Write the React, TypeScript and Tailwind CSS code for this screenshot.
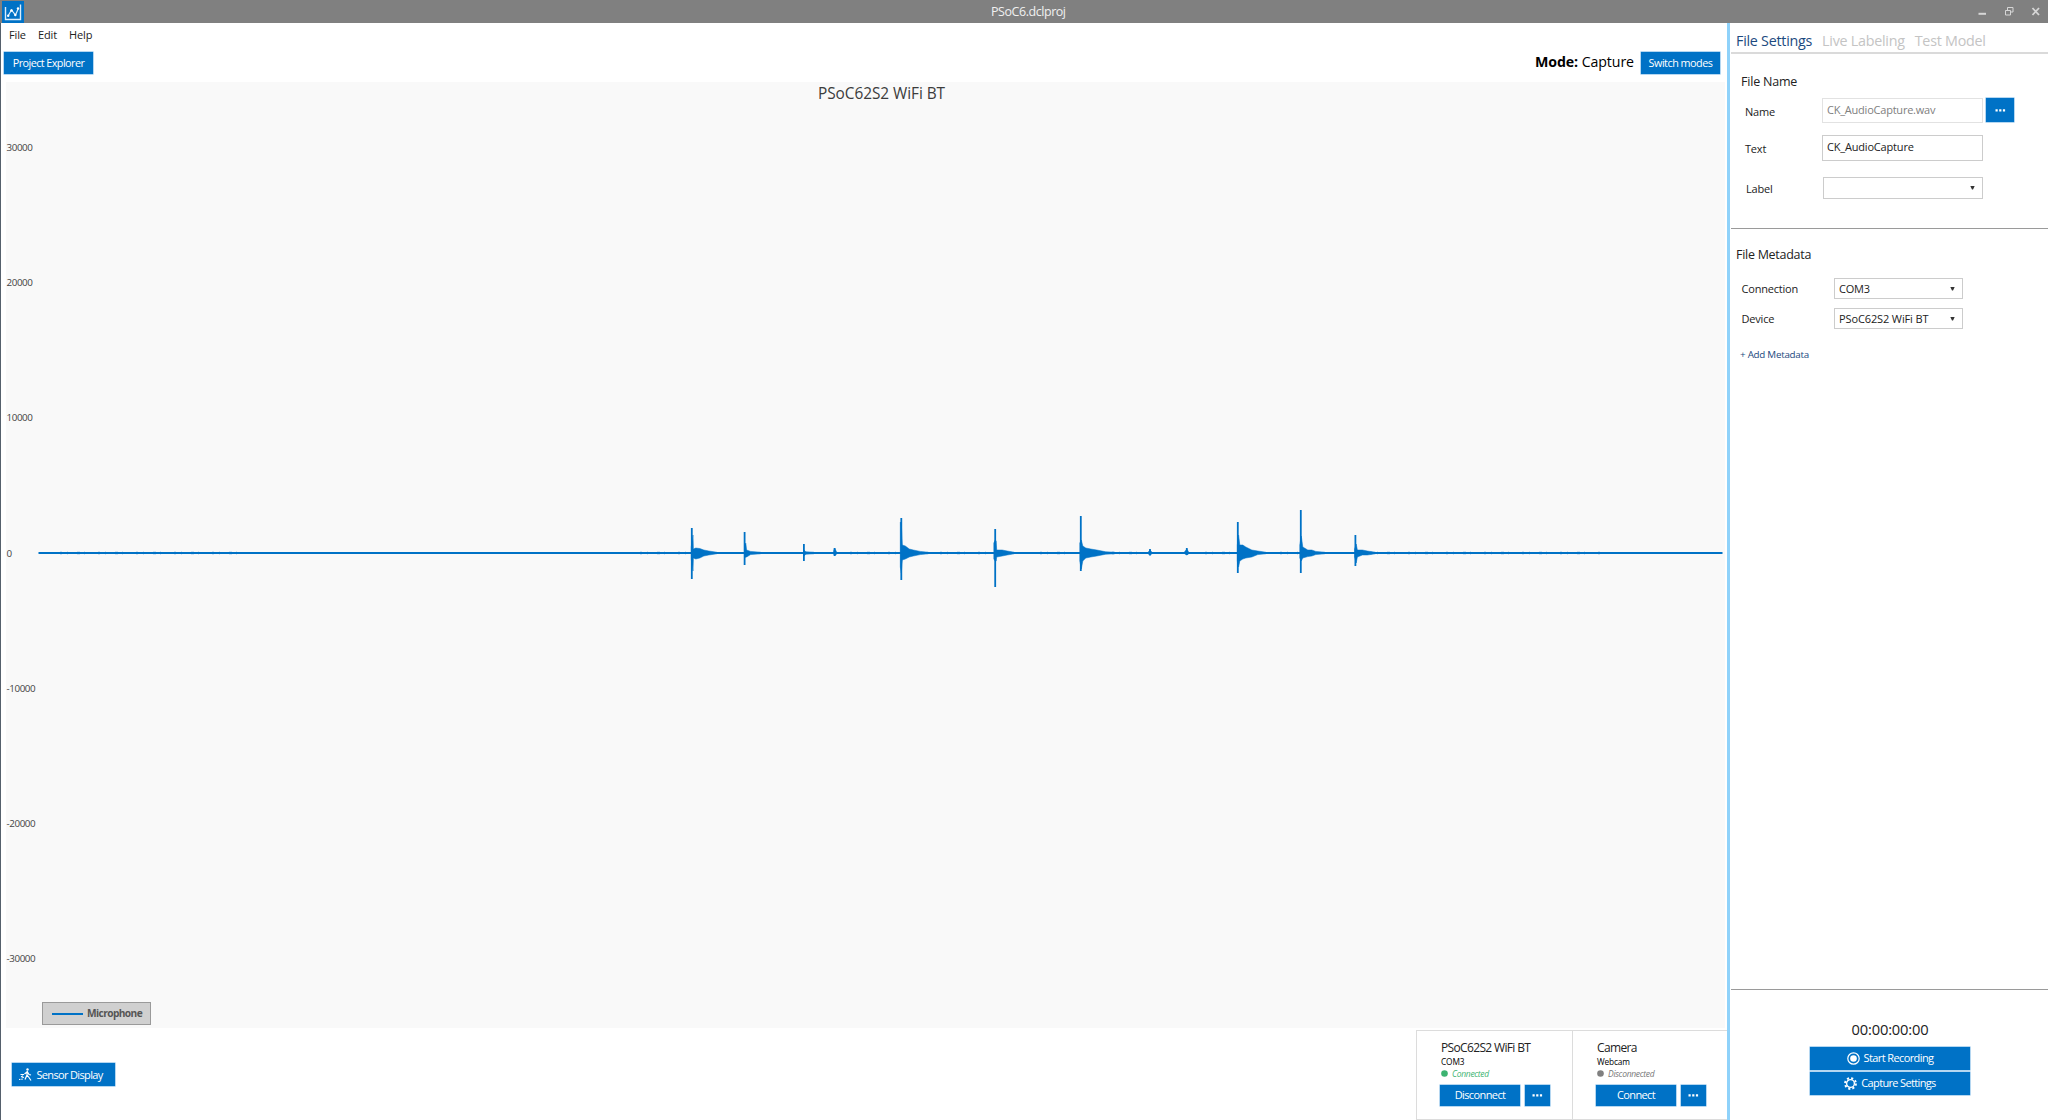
import React from "react";

const BLUE = "#0072c6";

function Arrow() {
  return (
    <svg width="5" height="4" viewBox="0 0 5 4" className="shrink-0">
      <path d="M0.300 0h4.400L3 3.500H2z" fill="#333" />
    </svg>
  );
}

function Dots() {
  return (
    <svg width="11" height="3" viewBox="0 0 11 3">
      <path d="M0.500 0.300h2.200v2.200H0.500zM4.200 0.300h2.200v2.200H4.200zM7.900 0.300h2.200v2.200H7.900z" fill="#fff" />
    </svg>
  );
}

const btn = "flex items-center justify-center bg-[#0072c6] text-white shadow-[0_0_0_0.5px_#6cb0e4]";

// x, top, bottom, then tail: [offset, half height above, half height below]
type Hit = { x: number; top: number; bottom: number; tail: [number, number, number][] };
const MID = 553;
const hits: Hit[] = [
  { x: 691.8, top: 528, bottom: 579, tail: [[-0.6, 6, 6], [1.2, 18, 18], [1.6, 4, 5], [4, 5, 6], [8, 4.5, 5], [12, 3, 3], [17, 2, 2], [25, 0.8, 0.8]] },
  { x: 744.6, top: 532, bottom: 565, tail: [[0, 8, 5], [1.2, 10, 4], [2, 3, 4], [6, 1.6, 1.6], [16, 0.8, 0.8]] },
  { x: 803.9, top: 544, bottom: 561, tail: [[0, 3, 3], [2, 1.2, 1.2], [10, 0.8, 0.8]] },
  { x: 834.6, top: 548, bottom: 556, tail: [[-1, 2, 1], [0, 5, 3], [2, 1, 1]] },
  { x: 901.3, top: 518, bottom: 580, tail: [[-1, 31, 14], [0, 30, 20], [1, 8, 7], [4, 7, 6], [8, 4, 4], [12, 3, 3], [19, 1.6, 1.6], [27, 0.8, 0.8]] },
  { x: 995.2, top: 529, bottom: 587, tail: [[-1.4, 10, 6], [0, 13, 8], [1, 12, 8], [1.5, 3, 4], [7, 3, 3], [12, 2, 2], [19, 0.8, 0.8]] },
  { x: 1080.8, top: 516, bottom: 571, tail: [[-1, 10, 8], [0.5, 13, 16], [2, 7, 8], [5, 5, 5], [10, 4, 4], [16, 3, 3], [25, 1.2, 1.2], [34, 0.8, 0.8]] },
  { x: 1150, top: 549, bottom: 555.5, tail: [[-2, 0.8, 0.8], [0, 3, 2], [2, 0.8, 0.8]] },
  { x: 1186.8, top: 548, bottom: 555, tail: [[-2, 1.5, 1], [0, 4, 2], [2, 0.8, 0.8]] },
  { x: 1237.8, top: 522, bottom: 573, tail: [[-0.5, 8, 8], [0.8, 18, 14], [2, 8, 8], [5, 8, 6], [8, 6, 5], [14, 3, 4], [20, 2, 1.6], [28, 0.8, 0.8]] },
  { x: 1300.8, top: 510, bottom: 573, tail: [[-1, 8, 5], [0.5, 17, 8], [2, 6, 5], [7, 3, 3.6], [11, 3, 3], [15, 1.6, 1.6], [24, 0.8, 0.8]] },
  { x: 1355.4, top: 535, bottom: 566, tail: [[-0.8, 4, 4], [0.8, 9, 10], [2, 3, 4], [7, 3, 2], [12, 2, 2], [20, 0.8, 0.8]] },
];

function tailPath(h: Hit) {
  const up = h.tail.map(([o, a]) => `${h.x + o} ${MID - a}`);
  const down = [...h.tail].reverse().map(([o, , b]) => `${h.x + o} ${MID + b}`);
  return `M${[...up, ...down].join("L")}Z`;
}

function Waveform() {
  return (
    <svg width="1719" height="120" viewBox="0 493 1719 120" className="absolute left-0 top-[411px]">
      <g transform="translate(-6 0)" stroke={BLUE} fill={BLUE}>
        <path d="M38.500 553H1722.500" strokeWidth="1.800" />
        <path
          d="M60 553H240M640 553H690M850 553H896M940 553H990M1040 553H1078M1112 553H1148M1205 553H1234M1280 553H1298M1370 553H1600"
          strokeWidth="2.600"
          strokeDasharray="2 5 1 9 3 4 1 13"
          opacity="0.600"
        />
        {hits.map((h) => (
          <g key={h.x}>
            <path d={`M${h.x} ${h.top}V${h.bottom}`} strokeWidth="1.800" />
            <path d={tailPath(h)} strokeWidth="0.500" />
          </g>
        ))}
      </g>
    </svg>
  );
}

function TitleBar() {
  return (
    <header className="flex h-[23px] shrink-0 items-center bg-[#808080]">
      <div className="ml-[2px] flex h-[22px] w-[22px] shrink-0 items-center justify-center bg-[#0072c6]">
        <svg width="18" height="18" viewBox="0 0 18 18" fill="none" stroke="#d9ecfa" strokeWidth="1.200">
          <path d="M1.500 4v12.500h15V1.500" strokeWidth="1.400" />
          <path d="M4 13l3.500-6 4 5L14.500 5" />
          <g fill="#fff" stroke="none">
            <circle cx="4.200" cy="12.800" r="1.200" />
            <circle cx="7.500" cy="7.500" r="1.300" />
            <circle cx="11.300" cy="12" r="1.200" />
            <circle cx="14" cy="5.500" r="1.200" />
          </g>
        </svg>
      </div>
      <div className="ml-[967px] w-[974px] shrink-0 pt-[1px] text-[12.500px] tracking-[-0.450px] text-[#f0f0f0]">PSoC6.dclproj</div>
      <svg width="83" height="23" viewBox="0 0 83 23" fill="none" stroke="#d6d6d6" className="shrink-0">
        <path d="M13.500 13.800h7.500" strokeWidth="2" />
        <path d="M40.500 10.500h5v4.500h-5zM42.500 10V7.500h5.500v4.500h-2" />
        <path d="M67.500 8l6.500 7M74 8l-6.500 7" strokeWidth="1.800" />
      </svg>
    </header>
  );
}

function ChartPanel() {
  const ticks = ["30000", "20000", "10000", "0", "-10000", "-20000", "-30000"];
  return (
    <section className="relative ml-[5px] mr-[2px] h-[946px] shrink-0 bg-[#f9f9f9]">
      <h1 className="h-[22px] pl-[812px] pt-[1px] text-[15.400px] leading-[22px] tracking-[-0.050px] text-[#3c3c3c]">PSoC62S2 WiFi BT</h1>
      <div className="flex flex-col gap-[115.200px] pt-[34px]">
        {ticks.map((t) => (
          <div key={t} className="h-[20px] pl-[0.500px] text-[9.800px] leading-[20px] tracking-[-0.400px] text-[#444]">
            {t}
          </div>
        ))}
      </div>
      <Waveform />
      <div className="absolute left-[36px] top-[920px] flex h-[23px] w-[109px] items-center border border-[#9a9a9a] bg-[#d0d0d0]">
        <div className="ml-[9px] h-[2px] w-[31px] bg-[#0072c6]" />
        <div className="ml-[4px] pt-[1px] text-[10.200px] font-bold tracking-[-0.600px] text-[#555]">Microphone</div>
      </div>
    </section>
  );
}

function DeviceCard({ name, port, status, dot, statusClass, action }: { name: string; port: string; status: string; dot: string; statusClass: string; action: string }) {
  return (
    <div className="flex h-[88px] w-[155px] flex-col border-l border-[#dcdcdc] pl-[24px] first:w-[156px]">
      <div className="mt-[8px] h-[17px] text-[12px] leading-[18px] tracking-[-0.650px] text-[#222]">{name}</div>
      <div className="h-[11px] text-[8.300px] leading-[11px] tracking-[-0.150px] text-black">{port}</div>
      <div className="flex h-[13px] items-center gap-[4px]">
        <svg width="7" height="7"><circle cx="3.500" cy="3.500" r="3.300" fill={dot} /></svg>
        <span className={statusClass}>{status}</span>
      </div>
      <div className="mt-[4.500px] flex gap-[5px]">
        <div className={`${btn} -ml-[1px] h-[21px] w-[80px] pt-[1px] text-[11px] tracking-[-0.600px]`}>{action}</div>
        <div className={`${btn} h-[21px] w-[25px]`}><Dots /></div>
      </div>
    </div>
  );
}

function MainArea() {
  return (
    <main className="flex w-[1726px] shrink-0 flex-col">
      <nav className="flex h-[25px] items-center gap-[12px] pl-[8px] text-[11px] tracking-[-0.120px] text-[#222]">
        <span>File</span>
        <span>Edit</span>
        <span>Help</span>
      </nav>
      <div className="flex h-[34px] items-start pt-[4px]">
        <div className={`${btn} ml-[3px] h-[22px] w-[89px] pt-[1px] text-[10.800px] tracking-[-0.550px]`}>Project Explorer</div>
        <div className="ml-auto flex items-start">
          <div className="mr-[7px] h-[20px] text-[14.200px] leading-[20px] tracking-[-0.100px] text-black"><b>Mode:</b> Capture</div>
          <div className={`${btn} mr-[7px] h-[22px] w-[79px] pt-[1px] text-[10.800px] tracking-[-0.500px]`}>Switch modes</div>
        </div>
      </div>
      <ChartPanel />
      <div className="flex flex-1 items-start justify-between pt-[2px]">
        <div className={`${btn} ml-[11px] mt-[33px] h-[23px] w-[103px] gap-[4px] pr-[5px] text-[11px] tracking-[-0.650px]`}>
          <svg width="13" height="13" viewBox="0 0 13 13" fill="none" stroke="#fff" strokeWidth="1.200">
            <circle cx="8.500" cy="1.500" r="1.200" fill="#fff" stroke="none" />
            <path d="M8.300 3L8 7l2 2.500 2 3M8 7l-2 4.500M8 4L5.500 6M8.500 4l1.500 2.500 2 .5" />
            <path d="M1.500 6.500h3.500M2 8.500l3 1M0 11.500l4.500-.5M3.500 6v4" strokeDasharray="1.400 .9" />
          </svg>
          <span className="pt-[1px]">Sensor Display</span>
        </div>
        <div className="-ml-[1px] flex border-y border-[#dcdcdc]">
          <DeviceCard name="PSoC62S2 WiFi BT" port="COM3" status="Connected" dot="#3cb371" statusClass="text-[8.500px] leading-[13px] tracking-[-0.300px] italic text-[#3cb371]" action="Disconnect" />
          <DeviceCard name="Camera" port="Webcam" status="Disconnected" dot="#808080" statusClass="text-[8.500px] leading-[13px] tracking-[-0.300px] italic text-[#777]" action="Connect" />
        </div>
      </div>
    </main>
  );
}

function SidePanel() {
  return (
    <aside className="flex flex-1 flex-col border-l-[3px] border-[#8fd2fa] text-[11px] tracking-[-0.200px] text-[#222]">
      <div className="ml-[1px] flex h-[31px] items-center gap-[10px] border-b-[2px] border-[#dadada] pl-[5px] pt-[7px] text-[14.300px] tracking-[-0.250px] text-[#c4c4c4]">
        <span className="text-[#1c4a80]">File Settings</span>
        <span>Live Labeling</span>
        <span>Test Model</span>
      </div>
      <div className="ml-[1px] h-[175px] border-b border-[#9a9a9a] pl-[9px]">
        <div className="mt-[17px] h-[22px] pl-[1px] text-[12.500px] leading-[22px]">File Name</div>
        <div className="mt-[5px] flex h-[25px]">
          <div className="w-[82px] pl-[5px] leading-[27px]">Name</div>
          <div className="h-[25px] w-[161px] border border-[#e2e2e2] pl-[4px] leading-[22px] tracking-[-0.220px] text-[#808080]">CK_AudioCapture.wav</div>
          <div className={`${btn} ml-[3px] h-[24px] w-[28px]`}><Dots /></div>
        </div>
        <div className="mt-[12px] flex h-[26px]">
          <div className="w-[82px] pl-[5px] leading-[28px]">Text</div>
          <div className="h-[26px] w-[161px] border border-[#ccc] pl-[4px] leading-[22px] tracking-[-0.180px]">CK_AudioCapture</div>
        </div>
        <div className="mt-[16px] flex h-[22px]">
          <div className="w-[83px] pl-[6px] leading-[24px]">Label</div>
          <div className="flex h-[22px] w-[160px] items-center justify-end border border-[#ccc] pr-[7px]"><Arrow /></div>
        </div>
      </div>
      <div className="h-[761px] shrink-0">
        <div className="ml-[1px] h-full border-b border-[#9a9a9a] pl-[5px]">
          <div className="h-[38px] pt-[15px] text-[12.500px] leading-[22px] tracking-[-0.280px]">File Metadata</div>
          <div className="mt-[11px] flex h-[21px]">
            <div className="w-[98px] pl-[5.500px] leading-[22px]">Connection</div>
            <div className="flex h-[21px] w-[129px] items-center justify-between border border-[#ccc] pl-[4px] pr-[7px] pt-[1px]"><span>COM3</span><Arrow /></div>
          </div>
          <div className="mt-[9px] flex h-[21px]">
            <div className="w-[98px] pl-[5.500px] leading-[22px]">Device</div>
            <div className="flex h-[21px] w-[129px] items-center justify-between border border-[#ccc] pl-[4px] pr-[7px] pt-[1px]"><span className="tracking-[-0.120px]">PSoC62S2 WiFi BT</span><Arrow /></div>
          </div>
          <div className="mt-[17px] pl-[4px] text-[9.800px] leading-[18px] tracking-[-0.250px] text-[#1c4a80]">+ Add Metadata</div>
        </div>
      </div>
      <div className="flex flex-col items-center pl-[2px]">
        <div className="mt-[28px] h-[22px] text-[14.700px] leading-[22px] tracking-[-0.150px]">00:00:00:00</div>
        <div className={`${btn} mt-[7px] h-[23px] w-[160px] gap-[4px] tracking-[-0.600px]`}>
          <svg width="13" height="13" viewBox="0 0 13 13"><circle cx="6.500" cy="6.500" r="5.700" fill="none" stroke="#fff" strokeWidth="1.200" /><circle cx="6.500" cy="6.500" r="3.300" fill="#fff" /></svg>
          <span>Start Recording</span>
        </div>
        <div className={`${btn} mt-[2px] h-[23px] w-[160px] gap-[4px] tracking-[-0.650px]`}>
          <svg width="13" height="13" viewBox="0 0 13 13" fill="none" stroke="#fff">
            <circle cx="6.500" cy="6.500" r="3.900" strokeWidth="1.400" />
            <circle cx="6.500" cy="6.500" r="5.400" strokeWidth="2" strokeDasharray="2.120 2.120" />
          </svg>
          <span>Capture Settings</span>
        </div>
      </div>
    </aside>
  );
}

export default function App() {
  return (
    <div className="flex h-[1120px] w-[2048px] flex-col overflow-hidden bg-white font-['Open_Sans','Noto_Sans',sans-serif]">
      <TitleBar />
      <div className="flex flex-1 border-l border-[#55606c]">
        <MainArea />
        <SidePanel />
      </div>
    </div>
  );
}
